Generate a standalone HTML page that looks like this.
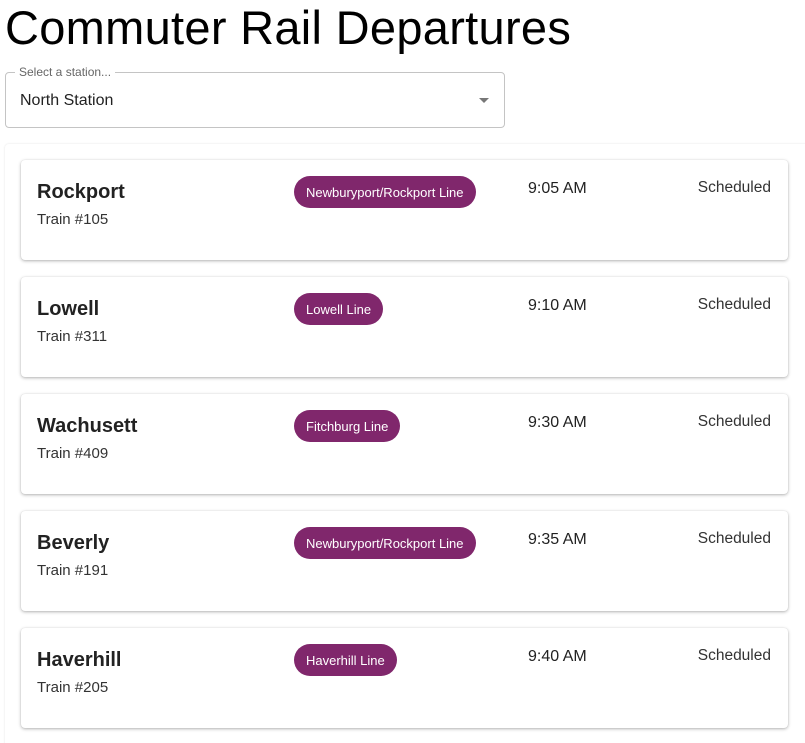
<!DOCTYPE html>
<html><head><style>
html,body{margin:0;background:#fff;font-family:"Liberation Sans",sans-serif;color:#000;width:805px;height:743px;overflow:hidden;position:relative}
h1{position:absolute;left:5px;top:1px;margin:0;font-weight:400;font-size:47px;line-height:54px;letter-spacing:0.3px;white-space:nowrap}
.sel{position:absolute;left:5px;top:72px;width:498px;height:54px;border:1px solid #c4c4c4;border-radius:4px}
.sel .lab{position:absolute;left:9px;top:-8px;background:#fff;padding:0 4px;font-size:12px;color:#666}
.sel .val{position:absolute;left:14px;top:19px;font-size:16px;color:#222}
.sel .arr{position:absolute;right:15px;top:25px;width:0;height:0;border-left:5px solid transparent;border-right:5px solid transparent;border-top:5px solid #777}
.paper{position:absolute;left:5px;top:144px;width:810px;height:620px;box-shadow:0 0 2px rgba(0,0,0,.12);border-radius:4px}
.card{position:absolute;left:21px;width:767px;height:100px;background:#fff;border-radius:4px;box-shadow:0 1px 3px rgba(0,0,0,.3),0 0 1px rgba(0,0,0,.1)}
.name{position:absolute;left:16px;top:21px;font-size:20px;font-weight:bold;color:#222}
.tr{position:absolute;left:16px;top:51px;font-size:15px;color:#333}
.chip{position:absolute;left:273px;top:16px;height:32px;line-height:33px;padding:0 12px;border-radius:16px;background:#80276c;color:#fff;font-size:13px}
.time{position:absolute;left:507px;top:20px;font-size:16px;color:#222}
.st{position:absolute;right:17px;top:19px;font-size:15.5px;color:#333}
</style></head><body>
<h1>Commuter Rail Departures</h1>
<div class="sel"><span class="lab">Select a station...</span><span class="val">North Station</span><span class="arr"></span></div>
<div class="paper"></div>
<div class="card" style="top:160px"><div class="name">Rockport</div><div class="tr">Train #105</div><div class="chip">Newburyport/Rockport Line</div><div class="time">9:05 AM</div><div class="st">Scheduled</div></div>
<div class="card" style="top:277px"><div class="name">Lowell</div><div class="tr">Train #311</div><div class="chip">Lowell Line</div><div class="time">9:10 AM</div><div class="st">Scheduled</div></div>
<div class="card" style="top:394px"><div class="name">Wachusett</div><div class="tr">Train #409</div><div class="chip">Fitchburg Line</div><div class="time">9:30 AM</div><div class="st">Scheduled</div></div>
<div class="card" style="top:511px"><div class="name">Beverly</div><div class="tr">Train #191</div><div class="chip">Newburyport/Rockport Line</div><div class="time">9:35 AM</div><div class="st">Scheduled</div></div>
<div class="card" style="top:628px"><div class="name">Haverhill</div><div class="tr">Train #205</div><div class="chip">Haverhill Line</div><div class="time">9:40 AM</div><div class="st">Scheduled</div></div>
</body></html>
